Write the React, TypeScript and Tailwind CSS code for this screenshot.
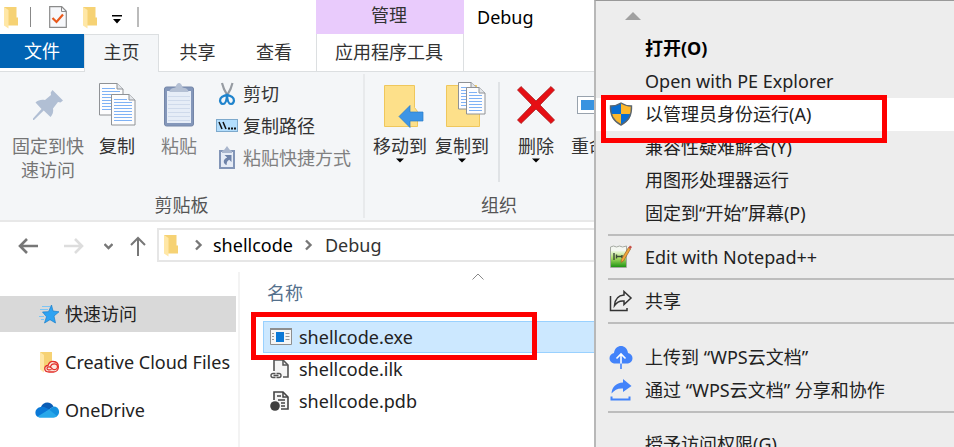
import React from "react";

function FolderIcon({ className = "w-4 h-6" }: { className?: string }) {
  return (
    <svg className={`shrink-0 ${className}`} viewBox="0 0 16 24" aria-hidden="true">
      <path d="M1 2h12.500v10.500H15V20.500H4z" fill="#f6d274" />
      <path d="M1 2l4.500 3v18.500L1 20.500z" fill="#ffe7a6" />
    </svg>
  );
}

function CheckPageIcon() {
  return (
    <svg width="18" height="22" viewBox="0 0 18 22" fill="none" aria-hidden="true">
      <path d="M.7.7h12l4.600 4.600v16H.7z" fill="#f7f8fb" stroke="#8b8b8b" strokeWidth="1.200" />
      <path d="M12.500 1v4.500H17" stroke="#8b8b8b" />
      <path d="M3.500 12l4 4L14 8.500" stroke="#e8591c" strokeWidth="2.200" />
    </svg>
  );
}

function PinIcon() {
  return (
    <svg width="32" height="32" viewBox="0 0 32 32" aria-hidden="true">
      <path d="M20.500 1L31 11.500l-2.500 2-2.500-.5-5 6.500c.8 3-.5 6.500-2.500 8.500l-6.800-6.500L2 31H1v-1.500L9.500 20 3.500 13.500c2.500-2.500 6-3.200 9.500-2.500l6-5-.3-2.500z" fill="#b1bfd4" />
    </svg>
  );
}

function Sheet({ x, y, w, h }: { x: number; y: number; w: number; h: number }) {
  const lines = [];
  for (let i = 5; i < h - 3; i += 3) lines.push(i);
  return (
    <g transform={`translate(${x} ${y})`} fill="none">
      <path d={`M.5.500H${w - 6}L${w} 6V${h}H.5z`} fill="#fdfdfe" stroke="#8f9296" />
      <path d={`M${w - 6} .5V6H${w}`} fill="#e3e6ea" stroke="#8f9296" />
      {lines.map((l) => (
        <path key={l} d={`M3 ${l}.5H${l < 7 ? w - 8 : w - 3}`} stroke="#7fb2f5" />
      ))}
    </g>
  );
}

function CopyIcon() {
  return (
    <svg width="38" height="44" viewBox="0 0 38 44" aria-hidden="true">
      <Sheet x={1} y={0} w={24} h={32} />
      <Sheet x={13} y={11} w={24} h={31} />
    </svg>
  );
}

function PasteIcon() {
  return (
    <svg width="30" height="44" viewBox="0 0 30 44" aria-hidden="true">
      <rect x=".5" y="4" width="29" height="39" rx="2" fill="#8497ba" stroke="#7486a8" />
      <path d="M3 8h24v32H3z" fill="#e6edf7" />
      <path d="M4 13.500h22M4 17.500h22M4 21.500h22M4 25.500h22M4 29.500h22M4 33.500h22M4 37.500h22" stroke="#cfdaeb" />
      <path d="M5.500 9c0-3 3-4 6-4.500C12 1.500 13.500 0 15 0s3 1.500 3.500 4.500c3 .5 6 1.500 6 4.500z" fill="#b4c0d4" />
    </svg>
  );
}

function ScissorsIcon() {
  return (
    <svg width="22" height="24" viewBox="0 0 22 24" fill="none" aria-hidden="true">
      <path d="M6 1l2 6 3.500 6.500M16.500 1l-2 6-3.500 6.500" stroke="#969ba2" strokeWidth="2.200" />
      <path d="M11 12.500c-1.500 1.500-5 1-6.500 4-1.200 3 .5 5.500 2.500 5.500 3.200 0 3.800-4.500 4-9.500zM11 12.500c1.500 1.500 5 1 6.500 4 1.200 3-.5 5.500-2.500 5.500-3.200 0-3.800-4.500-4-9.500z" stroke="#1f83cc" strokeWidth="2.200" strokeLinejoin="round" />
    </svg>
  );
}

function PathIcon() {
  return (
    <svg width="22" height="14" viewBox="0 0 22 14" aria-hidden="true">
      <rect x=".5" y=".5" width="21" height="12" fill="#b3defd" stroke="#7da9cc" />
      <path d="M3 3l3 7M7 3l3 7" stroke="#111" strokeWidth="1.500" />
      <path d="M12 8.500h2v2h-2zM15 8.500h2v2h-2zM18 8.500h2v2h-2z" fill="#111" />
    </svg>
  );
}

function PasteShortcutIcon() {
  return (
    <svg width="22" height="24" viewBox="0 0 22 24" aria-hidden="true">
      <path d="M3 4h16v19H3z" fill="#8295b7" />
      <path d="M5 6h12v15H5z" fill="#e6ecf6" />
      <path d="M6 7V5l2.500-1.500L11 0l2.500 3.500L16 5v2z" fill="#a9b6cd" />
      <path d="M8.500 9h7v7l-2.300-2.200c-2 1.200-2.700 2.700-2.500 5.200-4-1.500-4-6 .5-7.600z" fill="#6e83a9" />
    </svg>
  );
}

function MoveToIcon() {
  return (
    <svg width="54" height="46" viewBox="0 0 54 46" aria-hidden="true">
      <path d="M11.500 3.500h30v22l3 4v15h-33z" fill="#fde08a" stroke="#efc75c" />
      <path d="M26 34.500l11-11v6.500h13v9H37v6.500z" fill="#3d95e6" stroke="#2a7bc8" strokeWidth=".7" />
    </svg>
  );
}

function CopyToIcon() {
  return (
    <svg width="50" height="46" viewBox="-8 0 50 46" aria-hidden="true">
      <path d="M1.500 3.500h30v22l3 4v15h-33z" fill="#fde08a" stroke="#efc75c" />
      <Sheet x={13} y={0} w={19} h={27} />
      <Sheet x={21} y={5} w={19} h={27} />
    </svg>
  );
}

function DeleteIcon() {
  return (
    <svg width="40" height="40" viewBox="0 0 40 40" aria-hidden="true">
      <path d="M5 1.500l15 14.500 15-14.500 3.500 3.500L24 20l14.500 15-3.500 3.500L20 24 5 38.500 1.500 35 16 20 1.500 5z" fill="#e60f14" stroke="#a9191c" strokeWidth=".8" />
    </svg>
  );
}

function RenameIcon() {
  return (
    <svg width="42" height="18" viewBox="0 0 42 18" aria-hidden="true">
      <rect x=".5" y=".5" width="41" height="17" fill="#fff" stroke="#98a2ad" />
      <path d="M4 4h22v10H4z" fill="#3893e0" />
    </svg>
  );
}

function StarIcon() {
  return (
    <svg width="20" height="20" viewBox="0 0 20 20" aria-hidden="true">
      <path d="M12.500 1l1.500 6 6 .8-5 4.200 1.500 7-5.500-3.300L5.500 19l2-6.200L3.500 8l6-.3z" fill="#2ea3f2" stroke="#1a7fcb" strokeWidth=".7" />
      <path d="M3 2.500h8M1 5.500h8M0 12.500h5M2 15.500h3" stroke="#7cc5f5" />
    </svg>
  );
}

function CreativeCloudIcon() {
  return (
    <svg width="22" height="24" viewBox="0 0 22 24" fill="none" aria-hidden="true">
      <path d="M1 2h12v10h1v8H4z" fill="#f6d274" />
      <path d="M1 2l4 3v17.500l-4-3z" fill="#ffe7a6" />
      <path d="M10 22c-5.500 0-5.500-6.500-1-6.500 1-2.800 3-4.300 5.500-4 6.500.5 6.500 10.500 0 10.500z" fill="#fbe6dd" stroke="#e2312b" strokeWidth="1.300" />
      <path d="M12.500 19.500c-2 .8-4.500.5-4.500-1 0-2 3.200-2 4.500-.5l1 1c2.700 1.500 5-.2 5-2.300 0-3.700-6-4-7 0" stroke="#e2312b" strokeWidth="1.200" />
    </svg>
  );
}

function OneDriveIcon() {
  return (
    <svg width="24" height="16" viewBox="0 0 24 16" aria-hidden="true">
      <path d="M6 5c2-6 10-6 12.500-.5L12 9z" fill="#0a5cb5" />
      <path d="M5 15.500c-6-.5-6.500-9 .5-10.500 3.500-1 6 1 8.500 2.500z" fill="#0a78d7" />
      <path d="M18.500 4.500C25 4.500 26 13 20.500 15L13 8z" fill="#1490df" />
      <path d="M2.500 14.500L14 7.500l8 6.500c-1 1.200-2 1.700-3.500 1.700H5.500z" fill="#28a8ea" />
    </svg>
  );
}

function ExeIcon() {
  return (
    <svg width="22" height="18" viewBox="0 0 22 18" aria-hidden="true">
      <path d="M.5.500h21v16H.5z" fill="#f5f5f5" stroke="#8e8e8e" />
      <path d="M0 0h22v2H0z" fill="#8e8e8e" />
      <path d="M6 4h8v10H6z" fill="#0b78d6" />
      <path d="M2 5.500h2M2 8.500h2M2 11.500h2M15.500 5.500h4M15.500 8.500h4M15.500 11.500h4" stroke="#999" />
    </svg>
  );
}

function IlkIcon() {
  return (
    <svg width="22" height="20" viewBox="0 0 22 20" fill="none" aria-hidden="true">
      <path d="M4 12V1h9l5 5v12h-5" fill="#f5f5f5" stroke="#555" strokeWidth="1.600" />
      <path d="M13 1v5h5" stroke="#555" strokeWidth="1.500" />
      <path d="M5.500 14.500H3a2 2 0 000 4h2.500M6.500 14.500H9a2 2 0 010 4H6.500M3.500 16.500h5" stroke="#555" strokeWidth="1.400" />
    </svg>
  );
}

function PdbIcon() {
  return (
    <svg width="22" height="20" viewBox="0 0 22 20" fill="none" aria-hidden="true">
      <path d="M4 9V1h9l5 5v12h-7" fill="#f5f5f5" stroke="#444" strokeWidth="1.600" />
      <path d="M13 1v5h5M7 5h4M8 9h7M11 12h4M11 15h4" stroke="#444" strokeWidth="1.500" />
      <circle cx="5" cy="15" r="4.800" fill="#3f3f3f" />
    </svg>
  );
}

function ShieldIcon() {
  return (
    <svg width="24" height="24" viewBox="0 0 24 24" aria-hidden="true">
      <path d="M12 1C9 3 5 4 1.500 4c0 3 0 5.500.7 8H12z" fill="#0a6ed1" />
      <path d="M12 12h10c-1 4.500-4 8.500-10 11z" fill="#0a6ed1" />
      <path d="M12 12H2c1 4.500 4 8.500 10 11zM12 1c3 2 7 3 10.500 3 0 3 0 5.500-.5 8H12z" fill="#fdb82c" />
      <path d="M12 1C9 3 5 4 1.500 4c-.5 9 2.500 15 10.500 19 8-4 11-10 10.500-19C19 4 15 3 12 1z" fill="none" stroke="#5b6670" strokeWidth="1.400" />
    </svg>
  );
}

function NotepadIcon() {
  return (
    <svg width="24" height="24" viewBox="0 0 24 24" aria-hidden="true">
      <defs>
        <linearGradient id="leaf" x1="0" y1="0" x2="0" y2="1">
          <stop offset="0" stopColor="#eef7e4" />
          <stop offset=".45" stopColor="#a9dc62" />
          <stop offset="1" stopColor="#1f9413" />
        </linearGradient>
      </defs>
      <path d="M1.500 2l3-1 3 1 3-1 3 1 4-1v21.500h-16z" fill="#f4f7f1" stroke="#a5aaa2" />
      <path d="M2 6h15v16H2z" fill="url(#leaf)" />
      <path d="M5 8v7M7.500 9.500v4M8 11.500h5M13 10v3" stroke="#3a4a36" strokeWidth="1.400" />
      <path d="M19.500 2.500l2 1.500L14.500 16l-2.500 1.500.3-3z" fill="#f2a53a" stroke="#97642a" strokeWidth=".7" />
      <path d="M19.500 2.500L21 .5l2 1.500-1.500 2z" fill="#c64d45" />
    </svg>
  );
}

function ShareIcon() {
  return (
    <svg width="24" height="22" viewBox="0 0 24 22" fill="none" stroke="#333" strokeWidth="1.500" aria-hidden="true">
      <path d="M1.500 6v14.500H18V18" />
      <path d="M15 1.500l7 6.500-7 6.500V11c-4-.5-7 .8-9.500 4.500C6 9 9 5.500 15 5z" />
    </svg>
  );
}

function CloudUploadIcon() {
  return (
    <svg width="24" height="24" viewBox="0 0 24 24" fill="none" aria-hidden="true">
      <path d="M5 18.500C-1 17.500-1 9 5 8 6-1.500 18-1.500 19 8c6 1 6 9.500 0 10.500z" fill="#4383fa" />
      <path d="M12 19V9.500M7.500 13.500L12 9l4.500 4.500" stroke="#fff" strokeWidth="1.600" />
      <path d="M12 18.500V24" stroke="#4383fa" strokeWidth="1.600" />
    </svg>
  );
}

function CloudShareIcon() {
  return (
    <svg width="24" height="24" viewBox="0 0 24 24" fill="none" aria-hidden="true">
      <path d="M14 1l8.500 7-8.500 6v-3.500C9 10 5.500 12 2.500 15.500 3 9 7 5 14 4.500z" fill="#4383fa" />
      <path d="M2.500 18.500v3h18v-3" stroke="#4383fa" strokeWidth="2" />
    </svg>
  );
}

function Caret() {
  return (
    <svg width="8" height="5" viewBox="0 0 8 5" aria-hidden="true">
      <path d="M0 .5h8L4 4.500z" fill="#000" />
    </svg>
  );
}

function Chevron() {
  return (
    <svg width="8" height="12" viewBox="0 0 8 12" fill="none" aria-hidden="true">
      <path d="M1 1.500L5.500 6 1 10.500" stroke="#777" strokeWidth="2.400" />
    </svg>
  );
}

function BigButton({ icon, lines, tone = "text-[#333]", width, caret }: {
  icon: React.ReactNode;
  lines: string[];
  tone?: string;
  width: string;
  caret?: boolean;
}) {
  return (
    <button className={`flex shrink-0 flex-col items-center ${tone} ${width}`}>
      <span className="flex h-[50px] items-center justify-center">{icon}</span>
      <span className="mt-1 flex flex-col whitespace-nowrap">
        {lines.map((l) => <span key={l}>{l}</span>)}
      </span>
      {caret && <span className="flex h-1 items-center"><Caret /></span>}
    </button>
  );
}

function SmallButton({ icon, label, tone = "text-[#333]" }: { icon: React.ReactNode; label: string; tone?: string }) {
  return (
    <button className={`flex h-8 items-center gap-[5px] whitespace-nowrap ${tone}`}>
      <span className="flex w-[22px] justify-center">{icon}</span>
      {label}
    </button>
  );
}

function MenuItem({ icon, label, className = "" }: { icon?: React.ReactNode; label: string; className?: string }) {
  return (
    <li>
      <button className={`flex h-[33px] w-full items-center whitespace-nowrap pb-0.5 pl-3 text-left ${className}`}>
        <span className="mr-3 flex w-[25px] shrink-0 justify-center">{icon}</span>
        {label}
      </button>
    </li>
  );
}

function Separator() {
  return <li role="separator" className="mb-[5px] ml-3 mt-1 h-0.5 bg-[#bdbdbd]" />;
}

export default function App() {
  return (
    <div className="relative h-screen overflow-hidden bg-white font-['Noto_Sans','Noto_Sans_CJK_SC',sans-serif] text-[18px] leading-6 text-[#222]">
      <div className="flex h-full flex-col">
        <header className="flex shrink-0">
          <div className="flex w-[316px] shrink-0 flex-col">
            <div className="flex h-[34px] items-center pl-[3px]">
              <FolderIcon />
              <span className="ml-[11px] h-5 w-px bg-[#888]" />
              <button className="ml-[18px]" aria-label="属性"><CheckPageIcon /></button>
              <button className="ml-[15px]" aria-label="新建文件夹"><FolderIcon /></button>
              <button className="ml-3.5 pt-1" aria-label="自定义快速访问工具栏">
                <svg width="10" height="10" viewBox="0 0 10 10"><path d="M0 1h10v1.500H0zM1 5h8L5 9.500z" /></svg>
              </button>
              <span className="ml-[15px] h-5 w-0.5 bg-[#bbb]" />
            </div>
            <nav className="flex h-[38px] text-[#333]">
              <div className="w-[84px] border-b border-[#dcdfe1]">
                <button className="h-[34px] w-full bg-[#0164b4] text-white">文件</button>
              </div>
              <button className="w-[75px] border border-b-0 border-[#dcdfe1] bg-[#f4f6f8] pb-1">主页</button>
              <button className="w-[77px] border-b border-[#dcdfe1] pb-0.5">共享</button>
              <button className="flex-1 border-b border-[#dcdfe1] pb-0.5 pr-1">查看</button>
            </nav>
          </div>
          <div className="flex w-[148px] shrink-0 flex-col text-center text-[#333]">
            <div className="flex h-[34px] items-center justify-center bg-[#e9cbfc] pb-1 pr-0.5">管理</div>
            <button className="h-[38px] border-x border-b border-[#dcdfe1] pb-0.5 pr-0.5">应用程序工具</button>
          </div>
          <h1 className="flex-1 border-b border-[#dcdfe1] pl-[13px] pt-[5px] text-black">Debug</h1>
        </header>

        <section className="flex h-[150px] shrink-0 overflow-hidden border-b-2 border-[#e8e8e8] bg-[#f4f6f8] text-[#555]">
          <div className="my-0.5 flex w-[365px] shrink-0 flex-col border-r-2 border-[#e8eaec]">
            <div className="flex flex-1 pl-[11px] pt-1">
              <div className="flex pt-0.5">
                <BigButton icon={<PinIcon />} lines={["固定到快", "速访问"]} tone="text-[#757575]" width="w-[74px]" />
                <BigButton icon={<CopyIcon />} lines={["复制"]} width="w-16" />
                <BigButton icon={<PasteIcon />} lines={["粘贴"]} tone="text-[#808080]" width="w-[60px]" />
              </div>
              <div className="ml-[7px] flex flex-col">
                <SmallButton icon={<ScissorsIcon />} label="剪切" />
                <SmallButton icon={<PathIcon />} label="复制路径" />
                <SmallButton icon={<PasteShortcutIcon />} label="粘贴快捷方式" tone="text-[#808080]" />
              </div>
            </div>
            <div className="pb-px text-center">剪贴板</div>
          </div>
          <div className="my-0.5 flex w-[268px] shrink-0 flex-col">
            <div className="flex flex-1 pl-1 pt-1.5">
              <BigButton icon={<MoveToIcon />} lines={["移动到"]} width="w-[62px]" caret />
              <BigButton icon={<CopyToIcon />} lines={["复制到"]} width="w-[62px]" caret />
              <span className="mx-[5px] mt-0.5 h-[100px] w-0.5 bg-[#e0e3e6]" />
              <BigButton icon={<DeleteIcon />} lines={["删除"]} width="w-[62px]" caret />
              <BigButton icon={<RenameIcon />} lines={["重命名"]} width="w-[62px]" />
            </div>
            <div className="pb-px text-center">组织</div>
          </div>
        </section>

        <div className="flex h-[50px] shrink-0 items-center pb-1">
          <div className="flex w-[157px] shrink-0 items-center pl-[18px] pt-0.5">
            <button aria-label="后退">
              <svg width="20" height="18" viewBox="0 0 20 18" fill="none" stroke="#777" strokeWidth="2.600"><path d="M20 9H2M9 2L2 9l7 7" /></svg>
            </button>
            <button className="ml-[26px]" aria-label="前进">
              <svg width="20" height="18" viewBox="0 0 20 18" fill="none" stroke="#ddd" strokeWidth="2.600"><path d="M0 9h18M11 2l7 7-7 7" /></svg>
            </button>
            <button className="ml-5" aria-label="最近浏览的位置">
              <svg width="9" height="7" viewBox="0 0 9 7" fill="none" stroke="#777" strokeWidth="2.400"><path d="M.5 1l4 4 4-4" /></svg>
            </button>
            <button className="ml-4" aria-label="上移">
              <svg width="18" height="20" viewBox="0 0 18 20" fill="none" stroke="#777" strokeWidth="2"><path d="M9 20V2M2 9l7-7 7 7" /></svg>
            </button>
          </div>
          <nav className="flex h-[34px] flex-1 items-center border-2 border-r-0 border-[#e6e6e6] pl-1 text-black" aria-label="地址栏">
            <FolderIcon />
            <span className="ml-4"><Chevron /></span>
            <a href="#shellcode" className="ml-2.5">shellcode</a>
            <span className="ml-3"><Chevron /></span>
            <a href="#debug" className="ml-3 text-[#333]">Debug</a>
          </nav>
        </div>

        <div className="flex min-h-0 flex-1">
          <aside className="w-[240px] shrink-0 border-r-2 border-[#f3f3f3] pr-0.5 pt-6">
            <ul className="flex flex-col gap-3">
              <li><a href="#quick" className="flex h-9 items-center gap-1.5 bg-[#d9d9d9] pl-[39px]"><StarIcon />快速访问</a></li>
              <li><a href="#creative" className="flex h-9 items-center gap-1 whitespace-nowrap pl-[39px]"><CreativeCloudIcon />Creative Cloud Files</a></li>
              <li><a href="#onedrive" className="flex h-9 items-center gap-1.5 pl-[35px]"><OneDriveIcon />OneDrive</a></li>
            </ul>
          </aside>
          <main className="relative flex-1 pl-[23px]">
            <table className="w-full border-collapse">
              <thead>
                <tr>
                  <th className="h-[49px] pl-1 pt-0 text-left font-normal text-[#54708c]">
                    <div className="relative pb-2">
                      名称
                      <svg className="absolute -top-2 left-[205px]" width="12" height="7" viewBox="0 0 12 7" fill="none" stroke="#888"><path d="M.5 6.500L6 1l5.500 5.500" /></svg>
                    </div>
                  </th>
                </tr>
              </thead>
              <tbody>
                <tr className="bg-[#cce8ff] outline outline-1 -outline-offset-1 outline-[#99d1ff]">
                  <td className="h-8 p-0"><span className="flex items-center gap-[7px] pl-[7px]"><ExeIcon />shellcode.exe</span></td>
                </tr>
                <tr><td className="h-8 p-0"><span className="flex items-center gap-[7px] pl-[7px]"><IlkIcon />shellcode.ilk</span></td></tr>
                <tr><td className="h-8 p-0"><span className="flex items-center gap-[7px] pl-[7px]"><PdbIcon />shellcode.pdb</span></td></tr>
              </tbody>
            </table>
            <div className="pointer-events-none absolute left-[11px] top-10 h-12 w-[286px] border-[5px] border-[#fe0000]" />
          </main>
        </div>
      </div>

      <div className="absolute inset-y-0 left-[594px] right-0 border-l-2 border-t border-l-[#b8b8b8] border-t-[#999] bg-[#ededed]">
        <button className="flex h-[31px] w-[73px] items-center justify-center pb-0.5" aria-label="向上滚动">
          <svg width="16" height="8" viewBox="0 0 16 8"><path d="M8 0l8 8H0z" fill="#a0a0a0" /></svg>
        </button>
        <ul>
          <MenuItem label="打开(O)" className="font-bold text-black" />
          <MenuItem label="Open with PE Explorer" />
          <MenuItem icon={<ShieldIcon />} label="以管理员身份运行(A)" className="bg-white" />
          <MenuItem label="兼容性疑难解答(Y)" />
          <MenuItem label="用图形处理器运行" />
          <MenuItem label="固定到“开始”屏幕(P)" />
          <Separator />
          <MenuItem icon={<NotepadIcon />} label="Edit with Notepad++" />
          <Separator />
          <MenuItem icon={<ShareIcon />} label="共享" />
          <Separator />
        </ul>
        <ul className="pt-3">
          <MenuItem icon={<CloudUploadIcon />} label="上传到 “WPS云文档”" />
          <MenuItem icon={<CloudShareIcon />} label="通过 “WPS云文档” 分享和协作" />
          <Separator />
        </ul>
        <ul className="pt-2.5">
          <MenuItem label="授予访问权限(G)" />
        </ul>
        <div className="pointer-events-none absolute left-[5px] top-[94px] h-12 w-[286px] border-[5px] border-[#fe0000]" />
      </div>
    </div>
  );
}
